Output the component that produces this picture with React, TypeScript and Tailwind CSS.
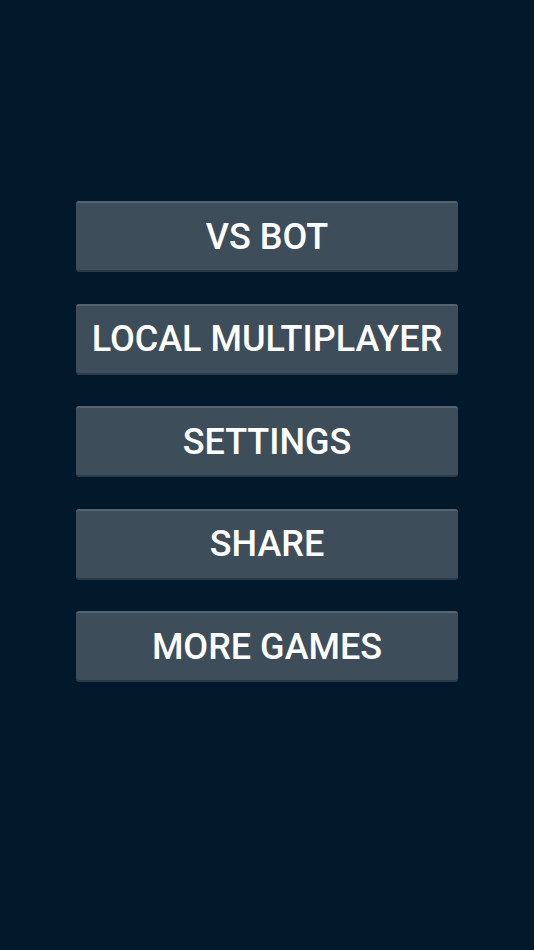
import React from 'react';

const items = ['VS BOT', 'LOCAL MULTIPLAYER', 'SETTINGS', 'SHARE', 'MORE GAMES'];

export default function App() {
  return (
    <div className="min-h-[950px] w-full bg-[#02182b] flex flex-col items-center pt-[201px] gap-[31.5px]" style={{ fontFamily: 'Roboto, "Noto Sans", sans-serif' }}>
      {items.map((label) => (
        <button
          key={label}
          className="w-[382px] h-[71px] rounded-[3px] bg-[#3d4d5a] border-t-2 border-t-[#56646f] border-b-2 border-b-[#2c3a45] text-white text-[36px] font-medium leading-none flex items-center justify-center"
        >
          {label}
        </button>
      ))}
    </div>
  );
}
